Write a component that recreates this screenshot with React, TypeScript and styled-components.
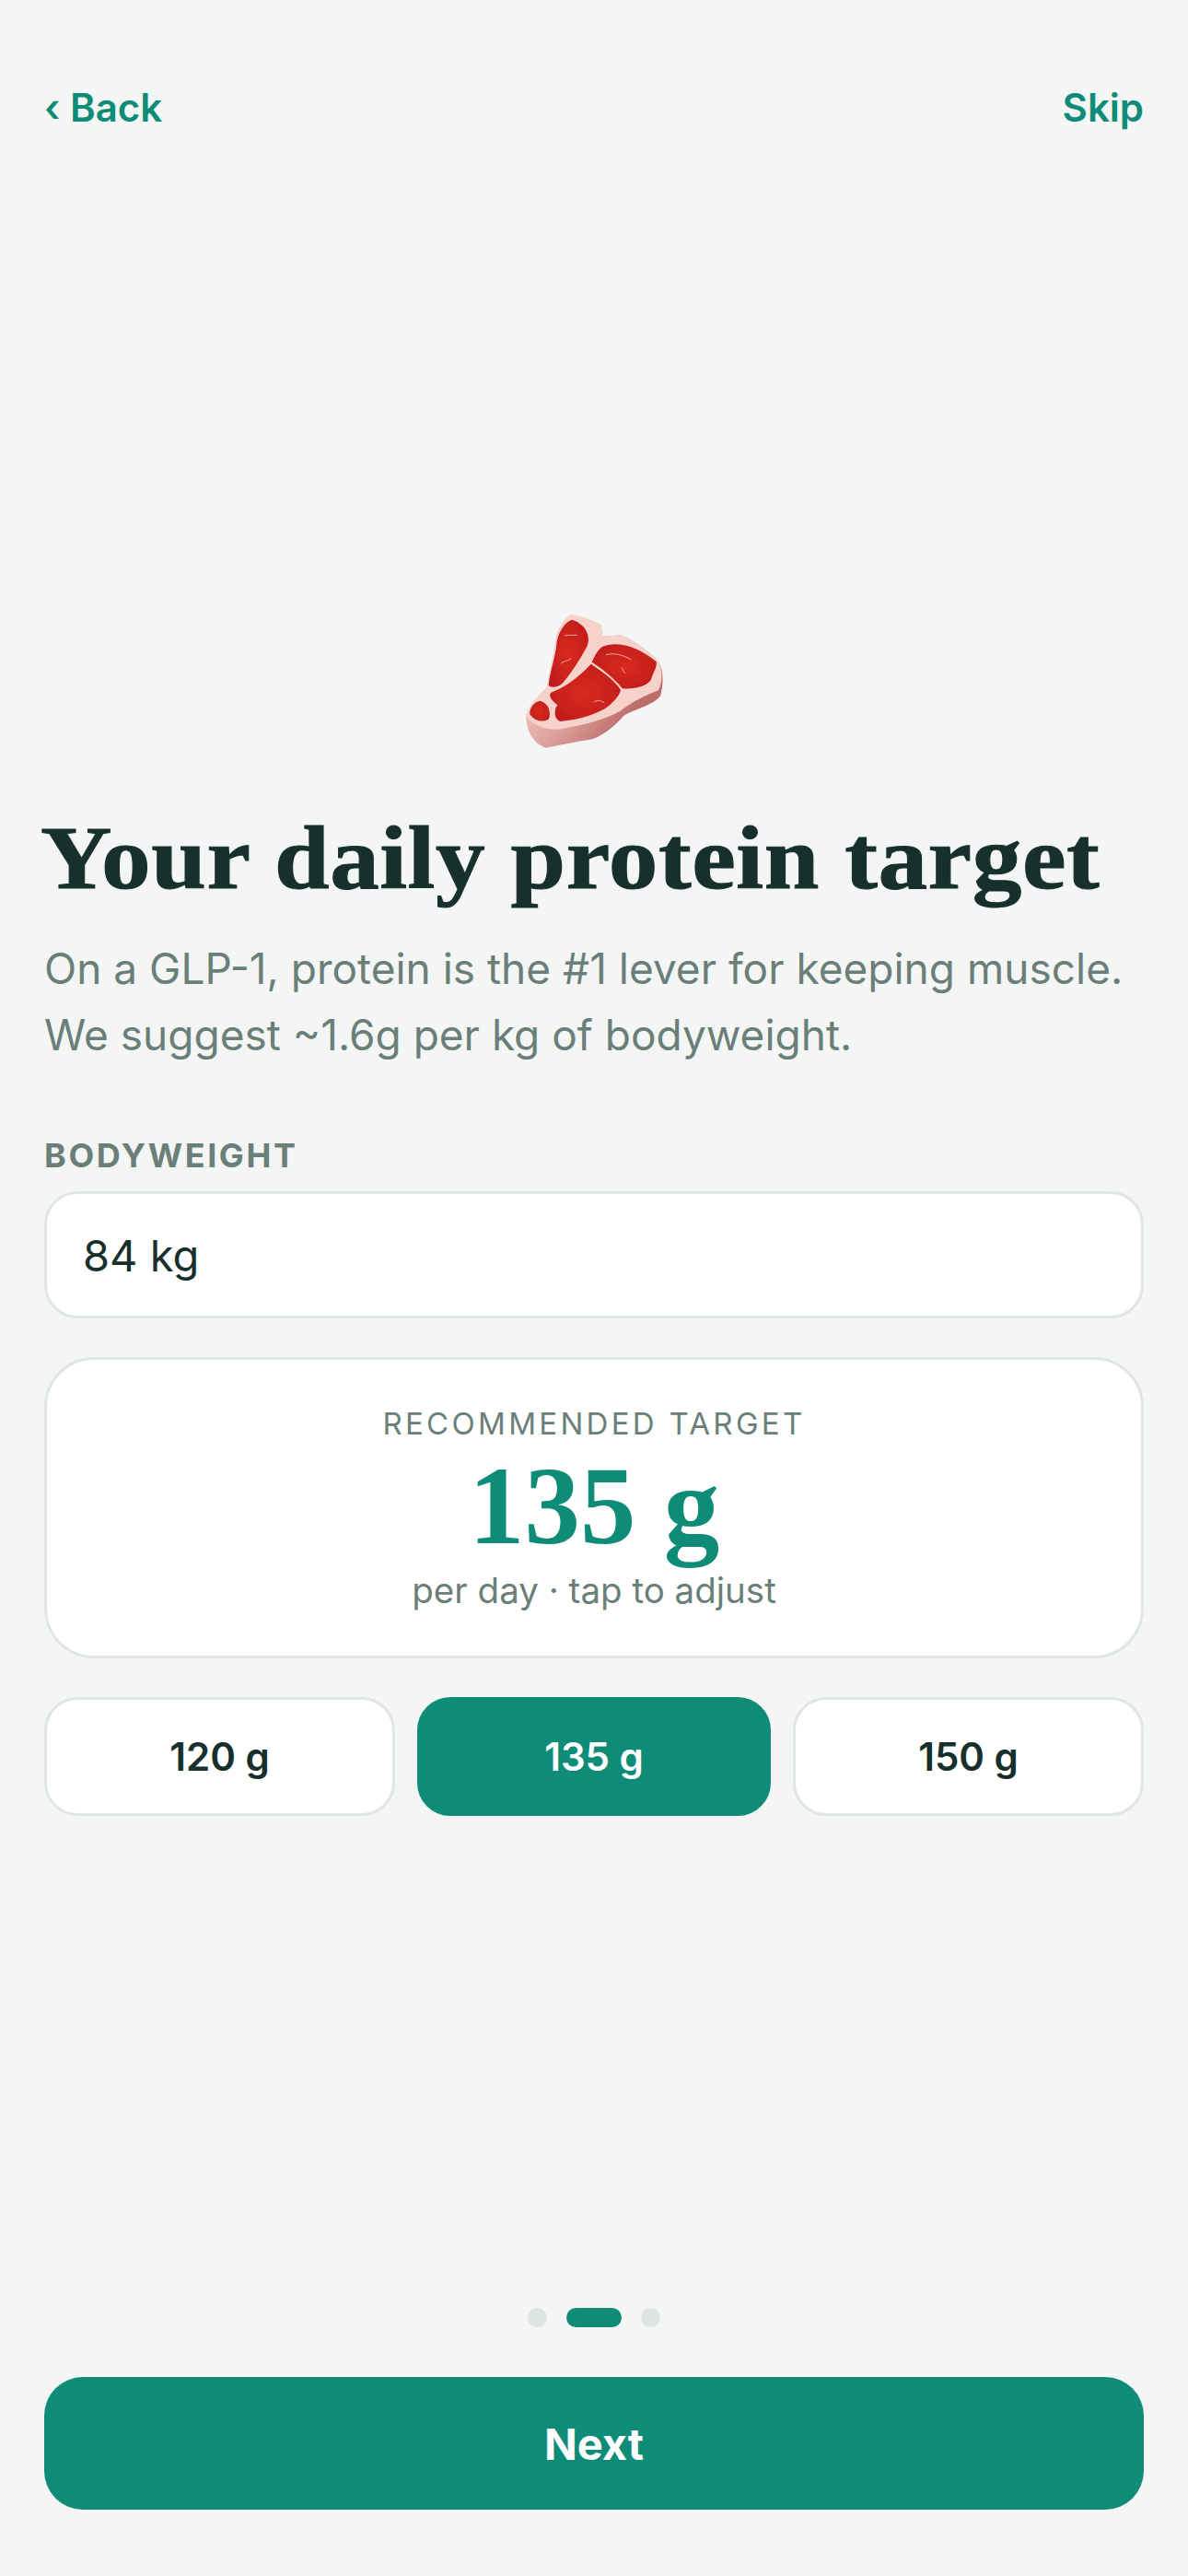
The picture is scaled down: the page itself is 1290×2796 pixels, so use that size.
import React from 'react'
import styled, { createGlobalStyle } from 'styled-components'

const GlobalStyle = createGlobalStyle`
  html, body { margin: 0; padding: 0; background: #f4f6f5; }
  * { box-sizing: border-box; }
`

const Steak = () => (
  <svg width="230" height="190" viewBox="0 0 690 570">
    <defs>
      <linearGradient id="side" x1="0" y1="0.6" x2="0.6" y2="1">
        <stop offset="0" stopColor="#f0c8c0" />
        <stop offset="0.55" stopColor="#d99a94" />
        <stop offset="1" stopColor="#bd6e6c" />
      </linearGradient>
      <radialGradient id="meat" cx="0.5" cy="0.5" r="0.7">
        <stop offset="0" stopColor="#d92a20" />
        <stop offset="1" stopColor="#bb1a1a" />
      </radialGradient>
      <filter id="soft">
        <feGaussianBlur stdDeviation="2" />
      </filter>
    </defs>
    <g filter="url(#soft)">
      <path d="M270 82 C300 85 335 98 368 115 L372 150 C395 155 420 145 435 148 C480 170 530 205 555 235 C572 265 572 300 562 345 C540 375 490 385 445 408 C415 440 385 470 340 487 C290 495 240 505 190 515 C155 505 125 470 123 410 C130 385 160 345 190 320 C205 260 215 190 225 140 C240 110 250 90 270 82 Z" fill="url(#side)" />
      <path d="M270 82 C300 85 335 98 368 115 L372 150 C395 155 420 145 435 148 C480 170 530 205 555 235 C570 265 568 300 555 328 C510 345 470 365 430 395 C380 425 300 442 230 455 C190 458 140 440 123 410 C130 385 160 345 190 320 C205 260 215 190 225 140 C240 110 250 90 270 82 Z" fill="#f6d2cb" />
      <path d="M272 98 C245 108 228 145 224 170 C220 220 200 270 197 312 C208 322 228 316 242 305 C268 275 295 235 322 185 C332 160 325 140 312 122 C298 108 285 100 272 98 Z" fill="url(#meat)" />
      <path d="M372 186 C420 165 490 185 548 235 C552 250 538 270 530 295 C515 315 480 325 438 322 C420 300 385 265 338 236 C348 215 358 195 372 186 Z" fill="url(#meat)" />
      <path d="M335 242 C380 272 420 302 432 328 C425 352 402 372 380 388 C340 412 280 426 235 429 C214 422 214 392 226 376 C208 362 195 346 205 335 C240 322 290 292 335 242 Z" fill="url(#meat)" />
      <path d="M170 362 C197 370 207 400 197 422 C175 434 150 427 136 405 C134 385 150 365 170 362 Z" fill="url(#meat)" />
    </g>
    <g fill="none" stroke="#f0a8a0" strokeWidth="3" strokeLinecap="round">
      <path d="M385 212 C410 205 440 212 465 228" />
      <path d="M288 148 C270 150 262 146 250 150" />
      <path d="M270 225 C255 235 245 232 238 240" />
      <path d="M345 365 C360 358 368 362 378 368" />
      <path d="M436 255 C440 262 442 268 446 272" />
    </g>
  </svg>
)

const App = () => {
  return (
    <Page>
      <GlobalStyle />
      <TopBar>
        <NavLink>‹ Back</NavLink>
        <NavLink>Skip</NavLink>
      </TopBar>
      <Content>
        <IconWrap><Steak /></IconWrap>
        <Title>Your daily protein target</Title>
        <Subtitle>On a GLP-1, protein is the #1 lever for keeping muscle. We suggest ~1.6g per kg of bodyweight.</Subtitle>
        <FieldLabel>BODYWEIGHT</FieldLabel>
        <WeightField>84 kg</WeightField>
        <TargetCard>
          <TargetLabel>RECOMMENDED TARGET</TargetLabel>
          <TargetValue>135 g</TargetValue>
          <TargetHint>per day · tap to adjust</TargetHint>
        </TargetCard>
        <Options>
          <Option>120 g</Option>
          <Option $active>135 g</Option>
          <Option>150 g</Option>
        </Options>
      </Content>
      <Footer>
        <Dots>
          <Dot />
          <Dot $active />
          <Dot />
        </Dots>
        <NextButton>Next</NextButton>
      </Footer>
    </Page>
  )
}

export default App

const Page = styled.div`
  width: 1290px;
  height: 2796px;
  overflow: hidden;
  background: #f4f6f5;
  display: flex;
  flex-direction: column;
  font-family: Inter, "Liberation Sans", sans-serif;
  padding: 0 48px 72px;
`

const TopBar = styled.div`
  display: flex;
  justify-content: space-between;
  padding-top: 92px;
  height: 142px;
`

const NavLink = styled.span`
  font-size: 42px;
  line-height: 50px;
  font-weight: 600;
  color: #0e8c78;
`

const Content = styled.div`
  flex: 1;
  display: flex;
  flex-direction: column;
  padding-top: 498px;
`

const IconWrap = styled.div`
  display: flex;
  justify-content: center;
  height: 190px;
`

const Title = styled.h1`
  align-self: flex-start;
  margin: 51px 0 0 -4px;
  font-family: "Liberation Serif", serif;
  font-weight: 700;
  font-size: 98px;
  line-height: 100px;
  letter-spacing: 0.5px;
  white-space: nowrap;
  color: #17302c;
  -webkit-text-stroke: 1px #17302c;
  transform: scaleX(1.094);
  transform-origin: left center;
`

const Subtitle = styled.p`
  margin: 34px 0 0;
  font-size: 46px;
  line-height: 72px;
  color: #6b7f79;
`

const FieldLabel = styled.div`
  margin-top: 73px;
  font-size: 36px;
  line-height: 44px;
  font-weight: 700;
  letter-spacing: 2.6px;
  color: #6b7f79;
`

const WeightField = styled.div`
  margin-top: 17px;
  height: 138px;
  background: #fff;
  border: 3px solid #dfe6e3;
  border-radius: 36px;
  padding: 0 39px;
  display: flex;
  align-items: center;
  font-size: 47px;
  color: #17302c;
`

const TargetCard = styled.div`
  margin-top: 42px;
  height: 327px;
  background: #fff;
  border: 3px solid #dfe6e3;
  border-radius: 54px;
  display: flex;
  flex-direction: column;
  align-items: center;
  padding-top: 49px;
`

const TargetLabel = styled.div`
  font-size: 33px;
  line-height: 40px;
  letter-spacing: 3.3px;
  color: #6b7f79;
`

const TargetValue = styled.div`
  font-family: "Liberation Serif", serif;
  font-weight: 700;
  font-size: 121px;
  line-height: 138px;
  color: #0e8c78;
`

const TargetHint = styled.div`
  font-size: 38.5px;
  line-height: 46px;
  color: #6b7f79;
`

const Options = styled.div`
  margin-top: 42px;
  display: grid;
  grid-template-columns: 1fr 384px 1fr;
  gap: 24px;
`

const Option = styled.div<{ $active?: boolean }>`
  height: 129px;
  border-radius: 36px;
  border: 3px solid ${({ $active }) => ($active ? '#0e8c78' : '#dfe6e3')};
  background: ${({ $active }) => ($active ? '#0e8c78' : '#fff')};
  color: ${({ $active }) => ($active ? '#fff' : '#17302c')};
  display: flex;
  align-items: center;
  justify-content: center;
  font-size: 42px;
  font-weight: 600;
`

const Footer = styled.div`
  display: flex;
  flex-direction: column;
  align-items: center;
`

const Dots = styled.div`
  display: flex;
  gap: 21px;
  margin-bottom: 54px;
`

const Dot = styled.div<{ $active?: boolean }>`
  width: ${({ $active }) => ($active ? '60px' : '21px')};
  height: 21px;
  border-radius: 11px;
  background: ${({ $active }) => ($active ? '#0e8c78' : '#dde5e2')};
`

const NextButton = styled.div`
  width: 100%;
  height: 144px;
  border-radius: 42px;
  background: #0e8c78;
  color: #fff;
  display: flex;
  align-items: center;
  justify-content: center;
  font-size: 47px;
  font-weight: 700;
`
